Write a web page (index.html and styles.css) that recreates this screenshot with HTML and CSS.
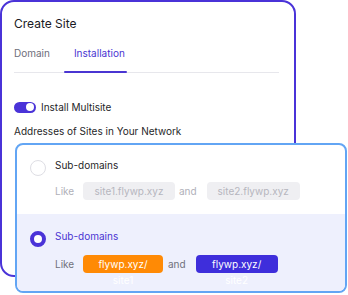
FILE: index.html
```html
<!DOCTYPE html>
<html>
<head>
<meta charset="utf-8">
<link rel="stylesheet" href="styles.css">
</head>
<body>
<div class="card">
  <h1 class="title">Create Site</h1>
  <div class="tabs">
    <span class="tab">Domain</span>
    <span class="tab active">Installation</span>
  </div>
  <div class="toggle-row">
    <span class="toggle"><span class="thumb"></span></span>
    <span class="toggle-label">Install Multisite</span>
  </div>
  <div class="section-label">Addresses of Sites in Your Network</div>
  <div class="options">
    <div class="option">
      <span class="radio"></span>
      <div class="opt-body">
        <div class="opt-title">Sub-domains</div>
        <div class="like-row">
          <span class="muted like">Like</span>
          <span class="pill pill-gray w92">site1.flywp.xyz</span>
          <span class="muted and">and</span>
          <span class="pill pill-gray w93">site2.flywp.xyz</span>
        </div>
      </div>
    </div>
    <div class="option selected">
      <span class="radio on"></span>
      <div class="opt-body">
        <div class="opt-title">Sub-domains</div>
        <div class="like-row">
          <span class="muted like">Like</span>
          <span class="pill pill-orange w80">flywp.xyz/<br>site1</span>
          <span class="muted and">and</span>
          <span class="pill pill-indigo w82">flywp.xyz/<br>site2</span>
        </div>
      </div>
    </div>
  </div>
</div>
</body>
</html>
```
FILE: styles.css
```css
* { box-sizing: border-box; }
html, body { margin: 0; padding: 0; background: #fff; }
body {
  font-family: Inter, "Noto Sans", sans-serif;
  font-size: 10px;
  color: #1f1f29;
  width: 348px;
  height: 295px;
  overflow: hidden;
}
.card {
  width: 296px;
  height: 277px;
  border: 2px solid #4a33d8;
  border-radius: 14px;
  padding: 14px 15px 0 12px;
  background: #fff;
}
.title {
  margin: 0;
  font-size: 12px;
  font-weight: 400;
  line-height: 16px;
  color: #1a1a24;
}
.tabs {
  margin-top: 14px;
  display: flex;
  gap: 24px;
  border-bottom: 1px solid #e7e7ec;
}
.tab {
  font-size: 10px;
  line-height: 14px;
  color: #6e6e7a;
  padding-bottom: 12px;
}
.tab.active {
  color: #4a35d2;
  position: relative;
}
.tab.active::after {
  content: "";
  position: absolute;
  left: -10px;
  right: -2px;
  bottom: -1px;
  height: 2px;
  background: #4a35d2;
  border-radius: 1px;
}
.toggle-row {
  margin-top: 27px;
  display: flex;
  align-items: center;
  gap: 5px;
}
.toggle {
  width: 22px;
  height: 11px;
  border-radius: 6px;
  background: #4a33d8;
  display: flex;
  align-items: center;
  justify-content: flex-end;
  padding-right: 2px;
}
.thumb {
  width: 8px;
  height: 8px;
  border-radius: 50%;
  background: #fff;
}
.toggle-label { line-height: 14px; color: #1f1f29; }
.section-label {
  margin-top: 10px;
  line-height: 14px;
  color: #1f1f29;
}
.options {
  margin: 5px 0 0 1px;
  width: 332px;
  border: 2px solid #62a5f4;
  border-radius: 8px;
  background: #fff;
  overflow: hidden;
}
.option {
  display: flex;
  gap: 9px;
  height: 69px;
  padding: 13px 12px 0 13px;
}
.option.selected {
  background: #eef0fd;
  padding-top: 15px;
  height: 77px;
}
.radio {
  flex: none;
  width: 16px;
  height: 16px;
  margin-top: 2px;
  border-radius: 50%;
  border: 1.5px solid #dedee4;
  background: #fff;
}
.radio.on {
  border: 4.5px solid #4a33d8;
}
.opt-title {
  line-height: 14px;
  color: #1f1f29;
}
.selected .opt-title { color: #4a35d2; }
.like-row {
  margin-top: 10px;
  display: flex;
  align-items: flex-start;
  height: 18px;
}
.selected .like-row { margin-top: 12px; }
.muted {
  color: #b0b0b9;
  line-height: 18px;
}
.muted.like { width: 28px; }
.muted.and { margin-left: 4px; margin-right: 10px; }
.selected .muted { color: #70707c; }
.selected .muted.and { margin-left: 5px; margin-right: 10px; }
.pill {
  flex: none;
  height: 18px;
  border-radius: 4px;
  text-align: center;
  line-height: 18px;
  font-size: 10px;
}
.pill-gray { background: #efeff2; color: #b6b6be; }
.pill-orange { background: #ff8a05; color: #fff; line-height: 16px; padding-top: 1px; }
.pill-indigo { background: #3e2edb; color: #fff; line-height: 16px; padding-top: 1px; }
.w92 { width: 92px; }
.w93 { width: 93px; }
.w80 { width: 80px; }
.w82 { width: 82px; }
```
